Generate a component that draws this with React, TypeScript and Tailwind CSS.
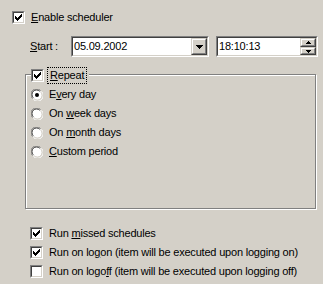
import React from "react";

// classic win9x bevels
const sunken =
  "border border-t-[#808080] border-l-[#808080] border-b-white border-r-white";
const sunkenInner =
  "border border-t-[#404040] border-l-[#404040] border-b-[#d4d0c8] border-r-[#d4d0c8]";
const raised =
  "border border-t-[#d4d0c8] border-l-[#d4d0c8] border-b-[#404040] border-r-[#404040]";
const raisedInner =
  "border border-t-white border-l-white border-b-[#808080] border-r-[#808080]";

const CheckBox = ({ checked }: { checked?: boolean }) => (
  <span className={`block w-[13px] h-[13px] shrink-0 ${sunken}`}>
    <span className={`block w-full h-full bg-white ${sunkenInner}`}>
      {checked && (
        <svg width="9" height="9" viewBox="0 0 9 9" shapeRendering="crispEdges" className="block">
          <path
            d="M7 1h1v3h-1zM6 2h1v3h-1zM5 3h1v3h-1zM4 4h1v3h-1zM3 5h1v3h-1zM2 4h1v3h-1zM1 3h1v3h-1z"
            fill="#000"
          />
        </svg>
      )}
    </span>
  </span>
);

const Radio = ({ checked }: { checked?: boolean }) => (
  <svg width="12" height="12" viewBox="0 0 12 12" className="block shrink-0">
    <circle cx="6" cy="6" r="5" fill="#fff" />
    <path d="M1.5 9.5A5.5 5.5 0 0 1 9.5 1.5" stroke="#808080" fill="none" />
    <path d="M10.5 2.5A5.5 5.5 0 0 1 2.5 10.5" stroke="#fff" fill="none" />
    <path d="M2.3 8.7A4.5 4.5 0 0 1 8.7 2.3" stroke="#404040" fill="none" />
    <path d="M9.7 3.3A4.5 4.5 0 0 1 3.3 9.7" stroke="#d4d0c8" fill="none" />
    {checked && <circle cx="6" cy="6" r="2" fill="#000" />}
  </svg>
);

const Arrow = ({ up, size = 7 }: { up?: boolean; size?: number }) => (
  <svg width={size} height={Math.ceil(size / 2)} viewBox={`0 0 ${size} ${Math.ceil(size / 2)}`} shapeRendering="crispEdges" className="block">
    <path
      d={up ? `M${size / 2} 0L${size} ${Math.ceil(size / 2)}H0z` : `M0 0H${size}L${size / 2} ${Math.ceil(size / 2)}z`}
      fill="#000"
    />
  </svg>
);

const Key = ({ children }: { children: React.ReactNode }) => <span className="underline underline-offset-[1px]">{children}</span>;

const CheckRow = ({ checked, children }: { checked?: boolean; children: React.ReactNode }) => (
  <div className="flex items-center h-[19px]">
    <CheckBox checked={checked} />
    <span className="ml-[6px] whitespace-nowrap">{children}</span>
  </div>
);

const RadioRow = ({ checked, children }: { checked?: boolean; children: React.ReactNode }) => (
  <div className="flex items-center h-[19px]">
    <Radio checked={checked} />
    <span className="ml-[6px] whitespace-nowrap">{children}</span>
  </div>
);

export default function App() {
  return (
    <div className="w-[323px] h-[284px] overflow-hidden bg-[#d4d0c8] text-black text-[11px] leading-[13px] tracking-[-0.2px] font-['Liberation_Sans',Arial,sans-serif] pt-[11px]">
      <div className="flex items-center h-[13px] pl-[12px]">
        <CheckBox checked />
        <span className="ml-[6px]">
          <Key>E</Key>nable scheduler
        </span>
      </div>

      <div className="mt-[12px] flex items-center h-[21px] pl-[30px]">
        <span className="w-[41px]">
          <Key>S</Key>tart :
        </span>
        <div className={`w-[138px] h-[21px] ${sunken}`}>
          <div className={`h-full bg-white flex items-center ${sunkenInner}`}>
            <span className="pl-[1px] flex-1">05.09.2002</span>
            <div className={`w-[16px] h-[17px] bg-[#d4d0c8] ${raised}`}>
              <div className={`h-full flex items-center justify-center ${raisedInner}`}>
                <Arrow />
              </div>
            </div>
          </div>
        </div>
        <div className={`ml-[7px] w-[102px] h-[21px] ${sunken}`}>
          <div className={`h-full bg-white flex items-center ${sunkenInner}`}>
            <span className="pl-[1px] flex-1">18:10:13</span>
            <div className="w-[16px] h-[17px] flex flex-col">
              <div className={`h-[9px] bg-[#d4d0c8] ${raised}`}>
                <div className={`h-full flex items-center justify-center ${raisedInner}`}>
                  <Arrow up size={5} />
                </div>
              </div>
              <div className={`h-[8px] bg-[#d4d0c8] ${raised}`}>
                <div className={`h-full flex items-center justify-center ${raisedInner}`}>
                  <Arrow size={5} />
                </div>
              </div>
            </div>
          </div>
        </div>
      </div>

      <div className="relative mt-[17px] ml-[25px] w-[291px] h-[135px] border border-[#808080] shadow-[inset_1px_1px_0_#fff,1px_1px_0_#fff]">
        <div className="absolute left-[5px] top-[-8px] flex items-center bg-[#d4d0c8] pr-[2px]">
          <CheckBox checked />
          <span className="ml-[3px] px-[2px] py-[1px] border border-dotted border-black">
            <Key>R</Key>epeat
          </span>
        </div>
        <div className="pt-[10px] pl-[5px] flex flex-col">
          <RadioRow checked>
            E<Key>v</Key>ery day
          </RadioRow>
          <RadioRow>
            On <Key>w</Key>eek days
          </RadioRow>
          <RadioRow>
            On <Key>m</Key>onth days
          </RadioRow>
          <RadioRow>
            <Key>C</Key>ustom period
          </RadioRow>
        </div>
      </div>

      <div className="mt-[15px] pl-[30px] flex flex-col">
        <CheckRow checked>
          Run <Key>m</Key>issed schedules
        </CheckRow>
        <CheckRow checked>
          Run on lo<Key>g</Key>on (item will be executed upon logging on)
        </CheckRow>
        <CheckRow>
          Run on logo<Key>f</Key>f (item will be executed upon logging off)
        </CheckRow>
      </div>
    </div>
  );
}
